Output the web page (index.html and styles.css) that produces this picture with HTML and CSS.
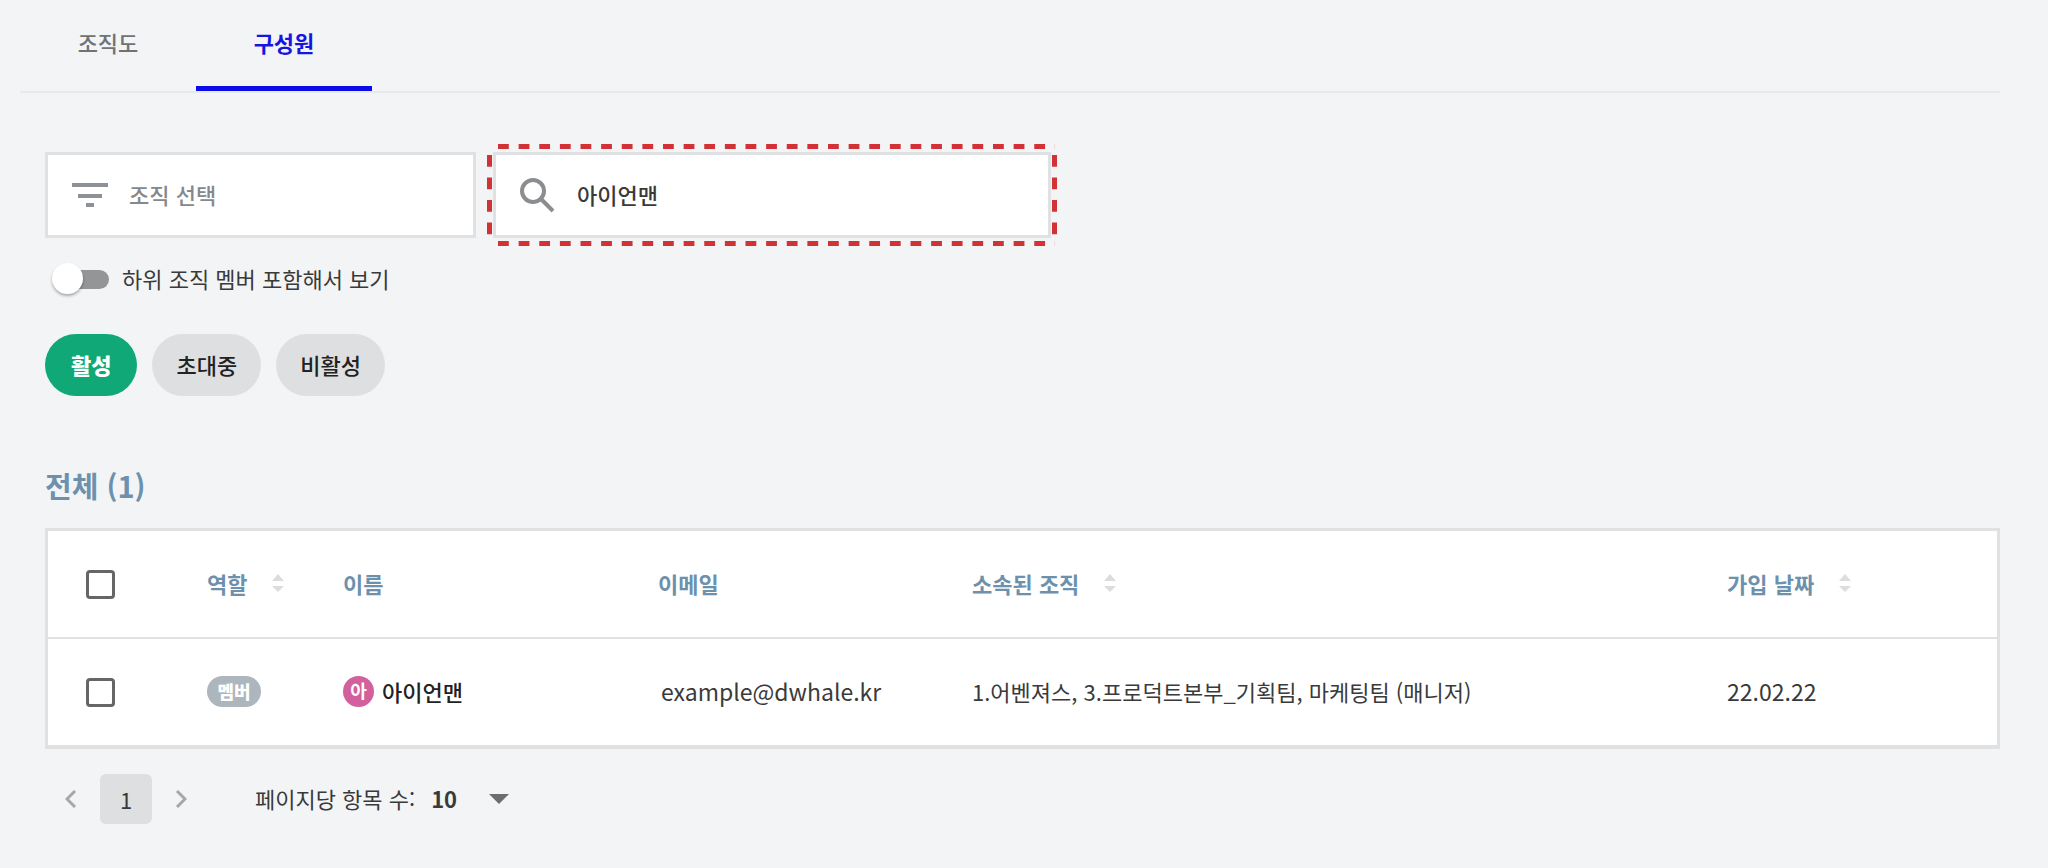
FILE: index.html
```html
<!DOCTYPE html>
<html lang="ko">
<head>
<meta charset="utf-8">
<meta name="viewport" content="width=device-width, initial-scale=1">
<title>구성원</title>
<link rel="stylesheet" href="styles.css">
</head>
<body>
<nav class="tabs">
  <a class="tab" href="#chart">조직도</a>
  <a class="tab tab-active" href="#members" aria-current="page">구성원</a>
</nav>
<main class="content">
  <form class="filters">
    <label class="field field-org">
      <svg class="icon-filter" viewBox="0 0 36 26" aria-hidden="true"><path d="M0 1h36v4H0zM6 12h24v4H6zM14 21h8v4h-8z"/></svg>
      <input type="text" placeholder="조직 선택" aria-label="조직 선택">
    </label>
    <div class="highlight">
      <label class="field">
        <svg class="icon-search" viewBox="0 0 36 36" aria-hidden="true"><circle cx="13" cy="14" r="11"/><path d="M21 22l12 12"/></svg>
        <input type="search" value="아이언맨" aria-label="구성원 검색">
      </label>
    </div>
  </form>
  <label class="switch">
    <input type="checkbox" role="switch">
    <span>하위 조직 멤버 포함해서 보기</span>
  </label>
  <div class="chips">
    <button type="button" class="chip chip-active" aria-pressed="true">활성</button>
    <button type="button" class="chip" aria-pressed="false">초대중</button>
    <button type="button" class="chip" aria-pressed="false">비활성</button>
  </div>
  <h1 class="title">전체 (1)</h1>
  <table class="members">
    <colgroup>
      <col class="col-check"><col class="col-role"><col class="col-name"><col class="col-email"><col><col class="col-date">
    </colgroup>
    <thead>
      <tr>
        <th scope="col" class="cell-check"><input class="check" type="checkbox" aria-label="전체 선택"></th>
        <th scope="col"><button type="button" class="sort">역할<svg class="icon-sort" viewBox="0 0 12 20" aria-hidden="true"><path d="M0 8l6-7 6 7zM0 13h12l-6 6z"/></svg></button></th>
        <th scope="col">이름</th>
        <th scope="col">이메일</th>
        <th scope="col"><button type="button" class="sort">소속된 조직<svg class="icon-sort" viewBox="0 0 12 20" aria-hidden="true"><path d="M0 8l6-7 6 7zM0 13h12l-6 6z"/></svg></button></th>
        <th scope="col"><button type="button" class="sort">가입 날짜<svg class="icon-sort" viewBox="0 0 12 20" aria-hidden="true"><path d="M0 8l6-7 6 7zM0 13h12l-6 6z"/></svg></button></th>
      </tr>
    </thead>
    <tbody>
      <tr>
        <td class="cell-check"><input class="check" type="checkbox" aria-label="아이언맨 선택"></td>
        <td><span class="badge">멤버</span></td>
        <td><span class="person"><span class="avatar">아</span>아이언맨</span></td>
        <td class="cell-email">example@dwhale.kr</td>
        <td>1.어벤져스, 3.프로덕트본부_기획팀, 마케팅팀 (매니저)</td>
        <td class="cell-date">22.02.22</td>
      </tr>
    </tbody>
  </table>
  <div class="pager">
    <nav class="pages" aria-label="페이지">
      <button type="button" class="arrow" aria-label="이전"><svg viewBox="0 0 12 18" aria-hidden="true"><path d="M10 1L2 9l8 8"/></svg></button>
      <button type="button" class="page" aria-current="page">1</button>
      <button type="button" class="arrow" aria-label="다음"><svg viewBox="0 0 12 18" aria-hidden="true"><path d="M2 1l8 8-8 8"/></svg></button>
    </nav>
    <div class="per-page">
      <label for="size">페이지당 항목 수:</label>
      <span class="size">
        <select id="size"><option>10</option><option>20</option><option>50</option></select>
        <svg viewBox="0 0 20 10" aria-hidden="true"><path d="M0 0h20L10 10z"/></svg>
      </span>
    </div>
  </div>
</main>
</body>
</html>
```
FILE: styles.css
```css
*, *::before, *::after { box-sizing: border-box; }
body {
  margin: 0;
  background: #f2f4f6;
  color: #3a3a3a;
  font-family: "Noto Sans CJK KR", "Noto Sans", sans-serif;
  font-size: 22px;
  line-height: 32px;
}
button, input, select { font: inherit; color: inherit; margin: 0; }
button { border: 0; padding: 0; background: none; cursor: pointer; }
svg { display: block; flex: none; }

.tabs {
  display: flex;
  margin: 0 48px 0 20px;
  border-bottom: 2px solid #e7e9ea;
}
.tab {
  width: 176px;
  height: 91px;
  padding-top: 26px;
  text-align: center;
  text-decoration: none;
  font-weight: 500;
  color: #707274;
}
.tab-active { color: #1616e0; border-bottom: 5px solid #0c0ce6; font-weight: 700; }

.content { padding: 51px 48px 40px 45px; }
.filters { display: flex; align-items: center; gap: 11px; }
.field {
  display: flex;
  align-items: center;
  width: 100%;
  height: 86px;
  padding: 0 24px;
  border: 3px solid #dfe1e2;
  background: #fff;
}
.field-org { width: 431px; }
.field input {
  flex: 1;
  min-width: 0;
  padding: 0 0 2px;
  border: 0;
  outline: 0;
  background: none;
  font-weight: 500;
  appearance: none;
}
.field input::placeholder { color: #85888c; opacity: 1; }
.icon-filter { width: 36px; height: 26px; margin-right: 21px; fill: #8c9198; }
.icon-search { width: 36px; height: 36px; margin-right: 21px; fill: none; stroke: #8b8e90; stroke-width: 4; }

.highlight { position: relative; width: 570px; padding: 8px 6px; }
.highlight::before, .highlight::after {
  content: "";
  position: absolute;
  pointer-events: none;
}
.highlight::before {
  inset: 0 2px 0 11px;
  background:
    linear-gradient(90deg, #d23135 53%, transparent 53%) left top / 21px 5px round no-repeat,
    linear-gradient(90deg, #d23135 53%, transparent 53%) left bottom / 21px 5px round no-repeat;
}
.highlight::after {
  inset: 11px 0 1px;
  background:
    linear-gradient(#d23135 50%, transparent 50%) left top / 5px 22px no-repeat round,
    linear-gradient(#d23135 50%, transparent 50%) right top / 5px 22px no-repeat round;
}

.switch { display: flex; width: fit-content; align-items: center; gap: 13px; margin: 16px 0 0 8px; }
.switch span { padding-bottom: 2px; }
.switch input {
  position: relative;
  appearance: none;
  width: 56px;
  height: 19px;
  border-radius: 10px;
  background: #949596;
}
.switch input::before {
  content: "";
  position: absolute;
  left: -1px;
  top: -7px;
  width: 31px;
  height: 31px;
  border-radius: 50%;
  background: #fff;
  box-shadow: 0 2px 3px rgba(0, 0, 0, .3);
}

.chips { display: flex; gap: 15px; margin-top: 38px; }
.chip {
  height: 62px;
  padding: 0 24px 3px;
  border-radius: 31px;
  background: #dedfe1;
  color: #222;
  font-weight: 500;
}
.chip-active { padding: 0 26px 3px; background: #0fa876; color: #fff; font-weight: 900; }

.title { margin: 69px 0 23px; font-size: 29px; line-height: 40px; font-weight: 700; color: #6d91ad; }

.members {
  width: 100%;
  table-layout: fixed;
  border-spacing: 0;
  border: 3px solid #dfe1e2;
  border-bottom-width: 4px;
  background: #fff;
}
.col-check { width: 135px; }
.col-role { width: 136px; }
.col-name { width: 315px; }
.col-email { width: 314px; }
.col-date { width: 294px; }
.members th, .members td { height: 106px; padding: 0 0 2px 24px; text-align: left; white-space: nowrap; }
.members th { height: 108px; border-bottom: 2px solid #dfe1e2; color: #6d91ad; font-weight: 700; }
.members .cell-check { padding: 0 0 0 38px; }
.members .cell-email { padding-left: 27px; font-size: 23px; }
.members .cell-date { font-size: 23px; }
.check {
  display: block;
  appearance: none;
  width: 29px;
  height: 29px;
  border: 3px solid #666;
  border-radius: 4px;
}
.sort { display: flex; align-items: center; gap: 25px; }
.icon-sort { width: 12px; height: 20px; fill: #dcdddf; }
.badge {
  display: block;
  width: 54px;
  height: 31px;
  border-radius: 16px;
  background: #adb5bd;
  color: #fff;
  font-size: 18px;
  line-height: 30px;
  font-weight: 900;
  text-align: center;
}
.person { display: flex; align-items: center; gap: 8px; color: #222; font-weight: 500; }
.avatar {
  width: 31px;
  height: 31px;
  border-radius: 50%;
  background: #d2609c;
  color: #fff;
  font-size: 18px;
  line-height: 28px;
  font-weight: 700;
  text-align: center;
}

.pager { display: flex; align-items: center; gap: 68px; margin-top: 25px; padding-left: 20px; }
.pages { display: flex; align-items: center; gap: 23px; }
.arrow svg { width: 12px; height: 18px; fill: none; stroke: #a6a7a9; stroke-width: 3; }
.page { width: 52px; height: 50px; border-radius: 6px; background: #dedfe1; }
.per-page { display: flex; align-items: center; gap: 16px; padding-bottom: 2px; }
.size { position: relative; }
.size select { appearance: none; width: 80px; padding: 0; border: 0; background: none; font-weight: 700; }
.size svg { position: absolute; right: 2px; top: 12px; width: 20px; height: 10px; fill: #6c6d6f; pointer-events: none; }
```
